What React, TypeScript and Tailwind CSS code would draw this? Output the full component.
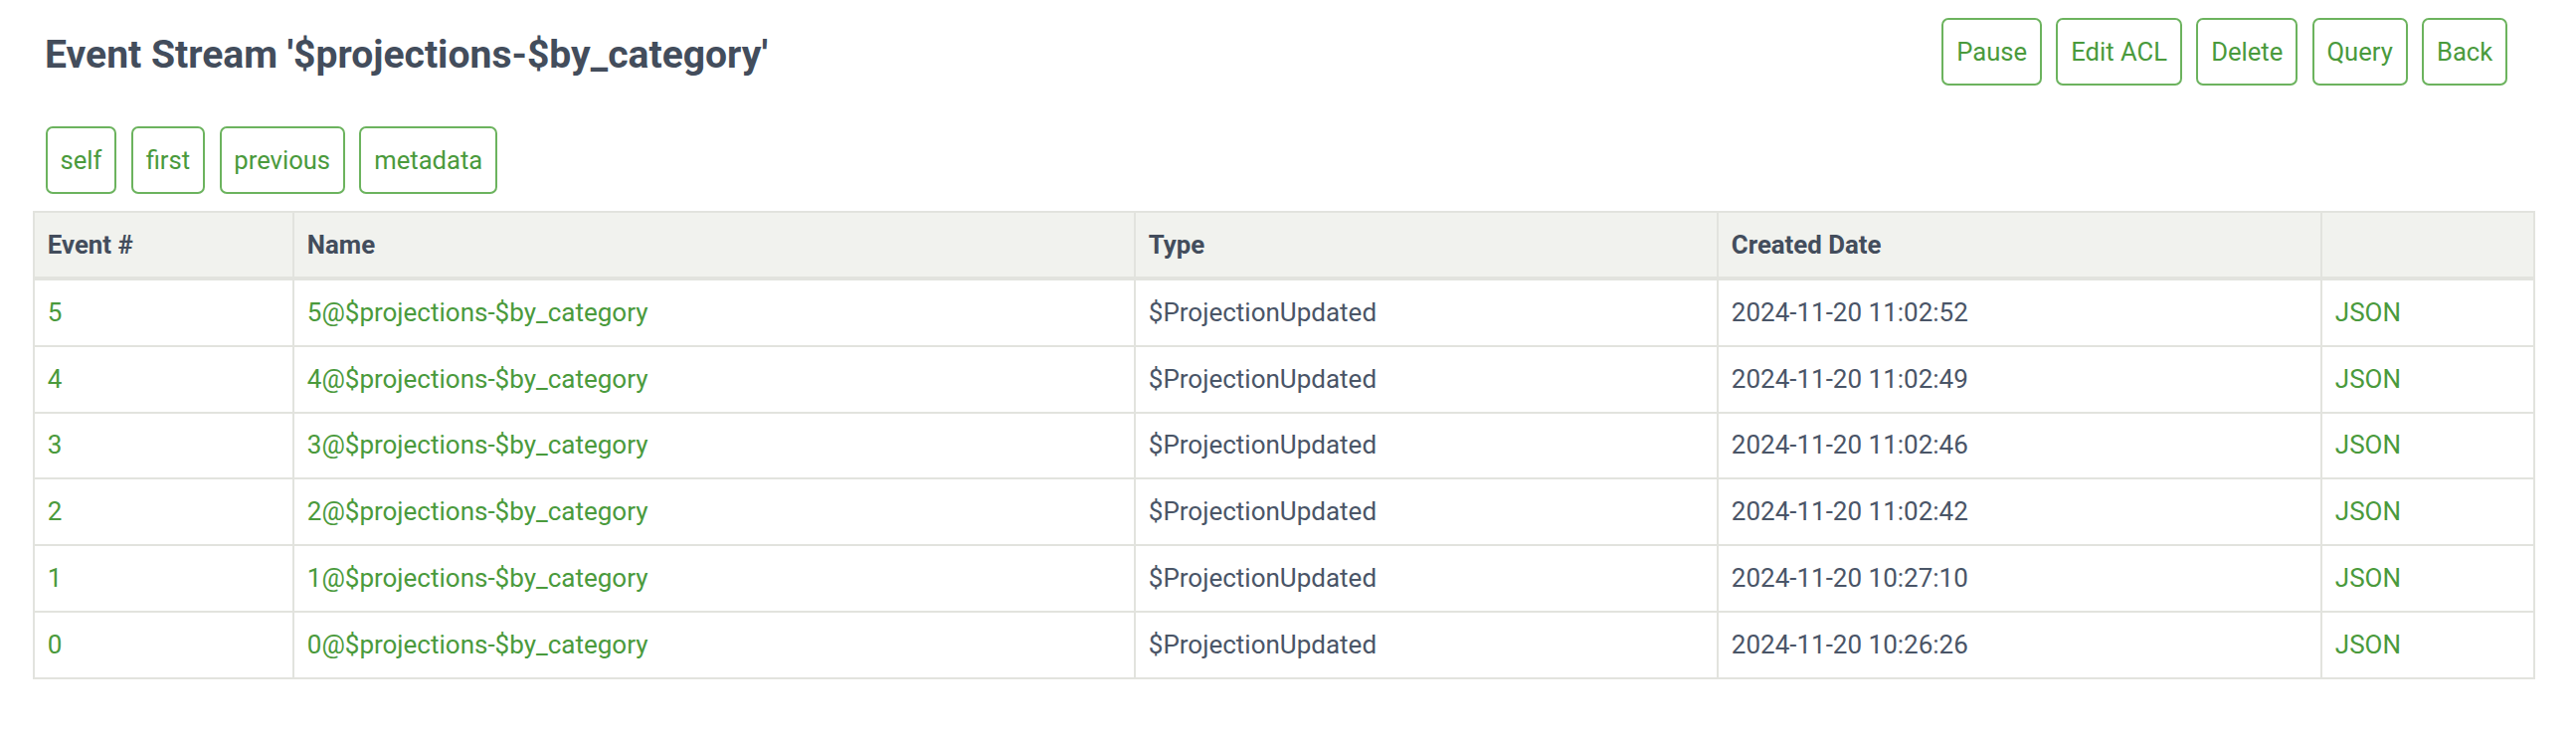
import React from "react";

const rows = [
  { n: 5, date: "2024-11-20 11:02:52" },
  { n: 4, date: "2024-11-20 11:02:49" },
  { n: 3, date: "2024-11-20 11:02:46" },
  { n: 2, date: "2024-11-20 11:02:42" },
  { n: 1, date: "2024-11-20 10:27:10" },
  { n: 0, date: "2024-11-20 10:26:26" },
];

function Btn({ children }: { children: React.ReactNode }) {
  return (
    <a className="flex h-[68px] items-center rounded-[7px] border-2 border-[#6cb35e] px-[12.8px] text-[25.6px] leading-[38px] text-[#4a9a3c] cursor-pointer">
      {children}
    </a>
  );
}

export default function App() {
  return (
    <div
      className="min-h-[744px] w-full bg-white pl-[33px] pr-[43px] pt-[18px]"
      style={{ fontFamily: "Roboto, 'Liberation Sans', sans-serif" }}
    >
      <div className="flex items-start justify-between pl-[12px] pr-[26px]">
        <h1 className="mt-[14px] text-[39.1px] font-bold leading-[46px] text-[#434d5c]">
          Event Stream '$projections-$by_category'
        </h1>
        <div className="flex gap-[14.6px]">
          <Btn>Pause</Btn>
          <Btn>Edit ACL</Btn>
          <Btn>Delete</Btn>
          <Btn>Query</Btn>
          <Btn>Back</Btn>
        </div>
      </div>
      <div className="mt-[40.5px] flex gap-[14.6px] pl-[12.8px]">
        <Btn>self</Btn>
        <Btn>first</Btn>
        <Btn>previous</Btn>
        <Btn>metadata</Btn>
      </div>
      <table className="mt-[17.5px] w-[2514px] table-fixed border-collapse border-2 border-[#e2e3de] text-[26px]">
        <colgroup>
          <col className="w-[261px]" />
          <col className="w-[846px]" />
          <col className="w-[586px]" />
          <col className="w-[607px]" />
          <col className="w-[214px]" />
        </colgroup>
        <thead>
          <tr className="bg-[#f1f2ee] border-b-4 border-[#e2e3de]">
            {["Event #", "Name", "Type", "Created Date", ""].map((h, i) => (
              <th
                key={i}
                className="border-x-2 border-[#e2e3de] px-[12.8px] py-[12.8px] text-left text-[25.8px] font-bold leading-[38.4px] text-[#434d5c]"
              >
                {h}
              </th>
            ))}
          </tr>
        </thead>
        <tbody>
          {rows.map((r) => (
            <tr key={r.n} className="border-b-2 border-[#e2e3de]">
              <td className="border-x-2 border-[#e2e3de] px-[12.8px] py-[12.9px] leading-[39px] text-[#4a9a3c]">
                {r.n}
              </td>
              <td className="border-x-2 border-[#e2e3de] px-[12.8px] py-[12.9px] leading-[39px] text-[#4a9a3c]">
                {r.n}@$projections-$by_category
              </td>
              <td className="border-x-2 border-[#e2e3de] px-[12.8px] py-[12.9px] leading-[39px] text-[#4a5567]">
                $ProjectionUpdated
              </td>
              <td className="border-x-2 border-[#e2e3de] px-[12.8px] py-[12.9px] leading-[39px] text-[#4a5567]">
                {r.date}
              </td>
              <td className="border-x-2 border-[#e2e3de] px-[12.8px] py-[12.9px] leading-[39px] text-[#4a9a3c]">
                JSON
              </td>
            </tr>
          ))}
        </tbody>
      </table>
    </div>
  );
}
